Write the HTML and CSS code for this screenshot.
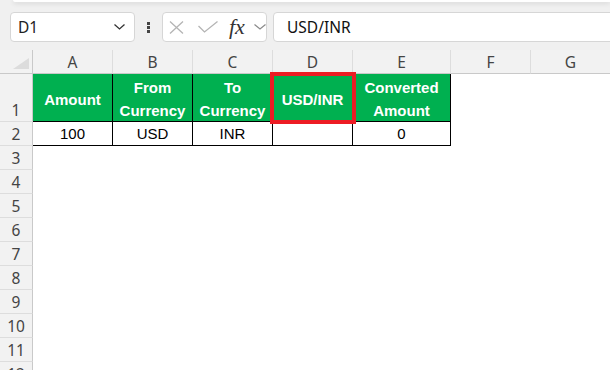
FILE: index.html
```html
<!DOCTYPE html>
<html lang="en">
  <head>
    <meta charset="UTF-8" />
    <title>Currency sheet</title>
    <link rel="stylesheet" href="styles.css">
  </head>
  <body>
    <!-- bottom edge of the ribbon -->
    <div class="ribbon-edge"></div>

    <!-- name box + formula bar -->
    <div class="toolbar">
      <div class="name-box">
        <span>D1</span>
        <svg width="11" height="6" viewBox="0 0 11 6"><path d="M0.5 0.5 L5.5 5 L10.5 0.5" fill="none" stroke="#333" stroke-width="1.3"/></svg>
      </div>
      <div class="grip"><i></i><i></i><i></i></div>
      <div class="fx-box">
        <svg class="ico-x" width="15" height="13" viewBox="0 0 15 13"><path d="M1 0.5 L14 12.5 M14 0.5 L1 12.5" stroke="#b4b4b4" stroke-width="1.3" fill="none"/></svg>
        <svg class="ico-ok" width="20" height="12" viewBox="0 0 20 12"><path d="M0.5 5 L6.5 11 L19.5 0.5" stroke="#b4b4b4" stroke-width="1.3" fill="none"/></svg>
        <span class="fx">fx</span>
        <svg class="ico-dd" width="12" height="6" viewBox="0 0 12 6"><path d="M0.5 0.5 L6 5 L11.5 0.5" fill="none" stroke="#8a8a8a" stroke-width="1.2"/></svg>
      </div>
      <div class="formula">USD/INR</div>
    </div>

    <!-- worksheet -->
    <div class="sheet">
      <div class="grid">
        <div class="corner"><span class="tri"></span></div>
        <div class="col-h">A</div>
        <div class="col-h">B</div>
        <div class="col-h">C</div>
        <div class="col-h">D</div>
        <div class="col-h">E</div>
        <div class="col-h">F</div>
        <div class="col-h">G</div>

        <div class="row-h">1</div>
        <div class="c t hd">Amount</div>
        <div class="c t hd">From<br>Currency</div>
        <div class="c t hd">To<br>Currency</div>
        <div class="c t hd">USD/INR</div>
        <div class="c t hd">Converted<br>Amount</div>
        <div class="c"></div>
        <div class="c"></div>

        <div class="row-h">2</div>
        <div class="c t">100</div>
        <div class="c t">USD</div>
        <div class="c t">INR</div>
        <div class="c t"></div>
        <div class="c t">0</div>
        <div class="c"></div>
        <div class="c"></div>
      </div>
      <div class="rows">
        <div class="row-h">3</div>
        <div class="row-h">4</div>
        <div class="row-h">5</div>
        <div class="row-h">6</div>
        <div class="row-h">7</div>
        <div class="row-h">8</div>
        <div class="row-h">9</div>
        <div class="row-h">10</div>
        <div class="row-h">11</div>
        <div class="row-h">12</div>
      </div>

      <!-- active cell outline -->
      <div class="sel"></div>
    </div>
  </body>
</html>
```

FILE: styles.css
```css
* {
  box-sizing: border-box;
}

body {
  margin: 0;
  height: 370px;
  overflow: hidden;
  background: #f0f0f0;
  font-family: "Liberation Sans", Arial, sans-serif;
  font-size: 15px;
}

.ribbon-edge {
  height: 2px;
  margin-left: 13px;
  background: #fff;
  border-bottom-left-radius: 4px;
  box-shadow: 0 1px 5px rgba(0, 0, 0, 0.18);
}

.toolbar {
  display: flex;
  align-items: center;
  height: 30px;
  margin: 10px 0 8px 10px;
  font-family: "Noto Sans", "Open Sans", sans-serif;
  font-size: 15.5px;
}

.name-box {
  display: flex;
  align-items: center;
  justify-content: space-between;
  width: 125px;
  height: 30px;
  padding: 0 9px 0 7px;
  background: #fff;
  border: 1px solid #d6d6d6;
  border-radius: 4px;
  color: #222;
}

.grip {
  display: flex;
  flex-direction: column;
  gap: 1px;
  margin-left: 12px;
}

.grip i {
  width: 3px;
  height: 3px;
  background: #444;
}

.fx-box {
  display: flex;
  align-items: center;
  width: 105px;
  height: 30px;
  margin-left: 12px;
  padding-left: 6px;
  background: #fff;
  border: 1px solid #d6d6d6;
  border-radius: 4px;
}

.ico-ok {
  margin-left: 14px;
}

.fx {
  margin-left: 11px;
  width: 19px;
  font-family: "Liberation Serif", "DejaVu Serif", serif;
  font-style: italic;
  font-size: 22px;
  color: #333;
  line-height: 20px;
}

.ico-dd {
  margin-left: 6px;
}

.formula {
  display: flex;
  align-items: center;
  flex: 1;
  height: 30px;
  margin: 0 -10px 0 6px;
  padding-left: 13px;
  background: #fff;
  border: 1px solid #d6d6d6;
  border-radius: 4px;
  color: #111;
}

.sheet {
  position: relative;
  background: #fff;
}

.grid {
  display: grid;
  grid-template-columns: 33px 80px 80px 80px 80px 98px 80px 80px;
  grid-template-rows: 24px 48px 24px;
}

.corner {
  display: flex;
  justify-content: flex-end;
  align-items: flex-end;
  padding: 0 3px 4px 0;
  background: #f2f2f2;
  border-right: 1px solid #c9c9c9;
  border-bottom: 1px solid #c9c9c9;
}

.tri {
  width: 16px;
  height: 11px;
  background: #dcdcdc;
  clip-path: polygon(100% 0, 100% 100%, 0 100%);
}

.col-h,
.row-h {
  font-family: "Noto Sans", "Open Sans", sans-serif;
  font-size: 15.5px;
  color: #444;
  background: #f2f2f2;
}

.col-h {
  display: flex;
  justify-content: center;
  align-items: center;
  padding-top: 1px;
  border-right: 1px solid #dddddd;
  border-bottom: 1px solid #c9c9c9;
}

.row-h {
  display: flex;
  justify-content: center;
  align-items: flex-end;
  padding-bottom: 1px;
  line-height: 20px;
  border-right: 1px solid #c9c9c9;
  border-bottom: 1px solid #dddddd;
}

.c {
  display: flex;
  justify-content: center;
  align-items: center;
  text-align: center;
  color: #000;
}

.t {
  border-right: 1px solid #000;
  border-bottom: 1px solid #000;
}

.hd {
  padding-top: 3px;
  line-height: 23px;
  background: #00b050;
  color: #fff;
  font-weight: bold;
}

.rows {
  display: grid;
  grid-template-columns: 33px;
  grid-auto-rows: 24px;
}

.sel {
  position: absolute;
  left: 270px;
  top: 22px;
  width: 86px;
  height: 52px;
  border: 4px solid #ed1c24;
}
```
